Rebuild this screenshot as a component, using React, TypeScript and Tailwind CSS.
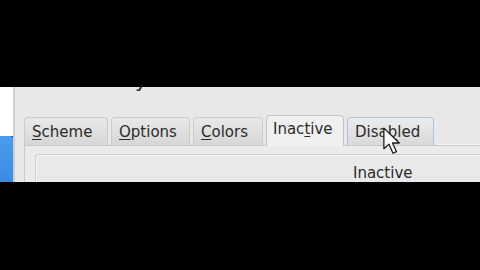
const font = "font-['DejaVu_Sans',_'Liberation_Sans',_sans-serif]";

type TabProps = {
  label: string;
  mnemonic: number;
  width: string;
  selected?: boolean;
  hover?: boolean;
};

function Tab({ label, mnemonic, width, selected, hover }: TabProps) {
  const before = label.slice(0, mnemonic);
  const letter = label.charAt(mnemonic);
  const after = label.slice(mnemonic + 1);

  if (selected) {
    return (
      <div
        className={`${width} relative z-10 -mb-px flex h-[31px] items-center rounded-t-[4px] border border-b-0 border-[#c4c4c4] bg-[#f0f0f0] pl-[6px] pb-[3px]`}
      >
        <span>
          {before}
          <span className="underline decoration-1 underline-offset-2">{letter}</span>
          {after}
        </span>
      </div>
    );
  }

  return (
    <div
      className={`${width} flex h-[28px] items-center rounded-t-[4px] border border-b-0 pl-[7px] pt-[1px] ${
        hover
          ? "border-[#a9c3e3] bg-gradient-to-b from-[#ececec] to-[#d9d9d9]"
          : "border-[#cbcbcb] bg-gradient-to-b from-[#e9e9e9] to-[#d6d6d6]"
      }`}
    >
      <span>
        {before}
        <span className="underline decoration-1 underline-offset-2">{letter}</span>
        {after}
      </span>
    </div>
  );
}

function Cursor() {
  return (
    <svg
      className="absolute left-[381px] top-[127px] z-20"
      width="24"
      height="32"
      viewBox="0 0 20 28"
    >
      <path
        d="M2 1 L2 19 L6.5 15 L10 23 L13 21.5 L9.5 14 L15.5 14 Z"
        fill="#fafafa"
        stroke="#1a1a1a"
        strokeWidth="1.1"
        strokeLinejoin="round"
      />
    </svg>
  );
}

export default function App() {
  return (
    <div className={`relative flex h-[270px] w-[480px] flex-col bg-black ${font}`}>
      <div className="h-[87px] bg-black" />

      <div className="flex h-[95px] overflow-hidden">
        <div className="flex w-[13px] flex-col">
          <div className="h-[49px] bg-white" />
          <div className="flex-1 rounded-tr-[2px] bg-gradient-to-b from-[#4a9cf0] to-[#3a8ae2]" />
        </div>
        <div className="w-[2px] bg-[#cfcfcf]" />

        <div className="relative flex flex-1 flex-col bg-[#e8e8e8] text-[15px] text-[#2b2b2b]">
          <div className="h-[29px] overflow-hidden">
            <div className="-mt-[20px] ml-[120px] text-[20px] leading-[26px] text-[#222]">y</div>
          </div>

          <div className="flex items-end gap-[3px] pl-[9px]">
            <Tab label="Scheme" mnemonic={0} width="w-[84px]" />
            <Tab label="Options" mnemonic={0} width="w-[79px]" />
            <Tab label="Colors" mnemonic={0} width="w-[70px]" />
            <Tab label="Inactive" mnemonic={4} width="w-[78px]" selected />
            <Tab label="Disabled" mnemonic={4} width="w-[87px]" hover />
            <div className="h-px flex-1 bg-[#f7f7f7]" />
          </div>

          <div className="ml-[9px] flex-1 border-l border-t border-[#cacaca] bg-[#ebebeb] pl-[10px] pt-[8px]">
            <div className="h-full rounded-tl-[4px] border-l border-t border-[#cdcdcd] bg-[#e9e9e9] shadow-[inset_1px_1px_0_#f6f6f6]">
              <div className="pl-[317px] pt-[9px] leading-[18px]">Inactive</div>
            </div>
          </div>
        </div>
      </div>

      <div className="flex-1 bg-black" />
      <Cursor />
    </div>
  );
}
